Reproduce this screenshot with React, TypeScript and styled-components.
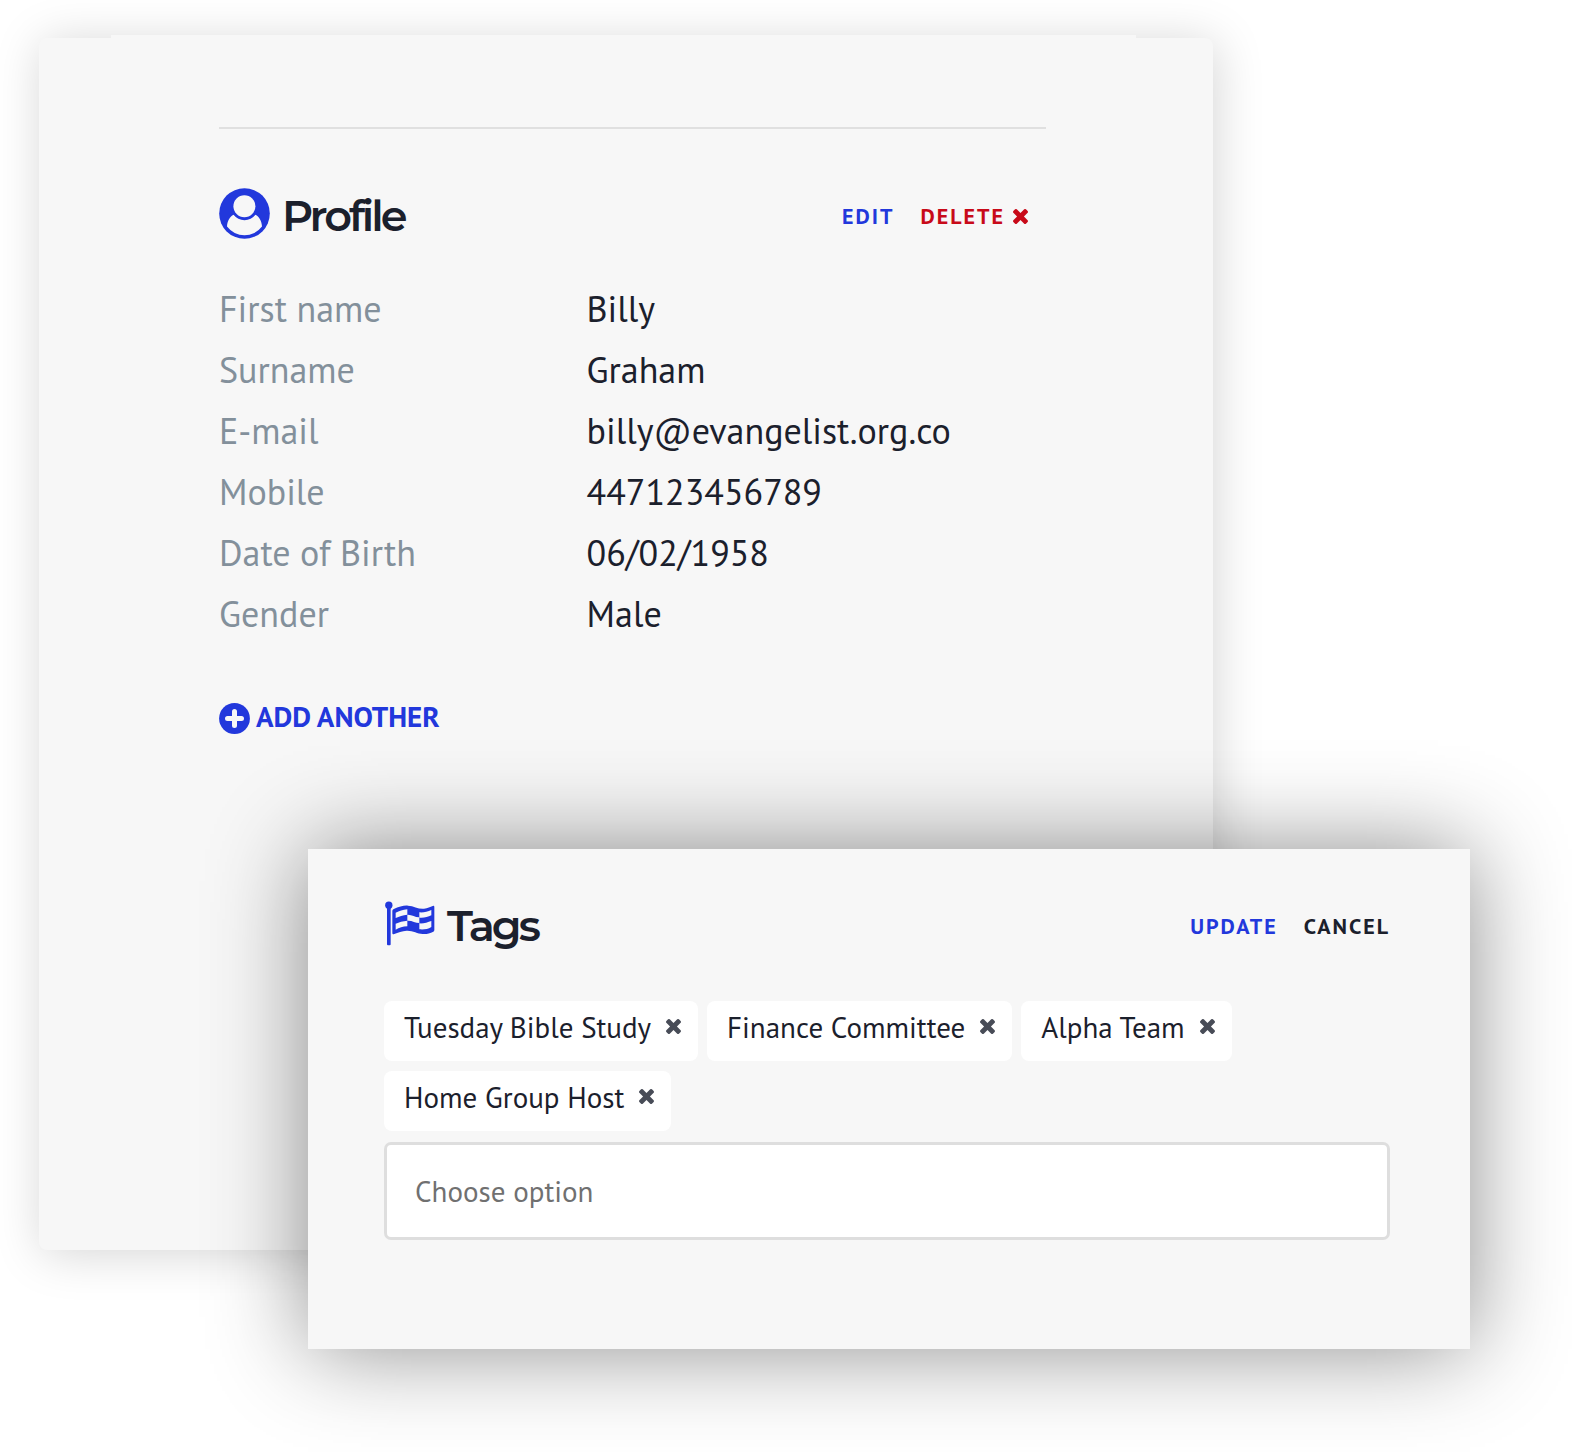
import React, { useState } from "react";
import styled, { createGlobalStyle } from "styled-components";

const BLUE = "#2238dc";
const INK = "#1b202c";
const RED = "#c80a19";

const GlobalStyle = createGlobalStyle`
  *, *::before, *::after { box-sizing: border-box; }
  body {
    margin: 0;
    background: #fff;
    color: ${INK};
    font-family: "PT Sans", "Noto Sans", sans-serif;
    overflow-x: hidden;
  }
  button, input { font-family: inherit; }
`;

const Page = styled.main`
  display: flow-root;
`;

const ProfileCard = styled.section`
  position: relative;
  margin: 38px 359px 0 39px;
  padding: 89px 167px 516px 180px;
  background: #f7f7f7;
  border-radius: 8px;
  box-shadow: 3px 4px 48px rgba(0, 0, 0, 0.17);

  &::before {
    content: "";
    position: absolute;
    top: -3px;
    left: 72px;
    right: 77px;
    height: 3px;
    background: #f7f7f7;
  }
`;

const Ruled = styled.div`
  border-top: 2px solid #e0e0e0;
  padding-top: 59px;
`;

const TagsPanel = styled.section`
  position: relative;
  margin: -401px 102px 104px 308px;
  padding: 49px 80px 109px 76px;
  background: #f7f7f7;
  box-shadow: 0 0 90px rgba(0, 0, 0, 0.45);
`;

const Header = styled.header<{ $inset?: boolean }>`
  display: flex;
  align-items: center;
  height: 56px;
  padding-right: ${(p) => (p.$inset ? 18 : 0)}px;
`;

const IconBox = styled.span`
  display: flex;
  margin-right: 12px;
  margin-bottom: 5px;
`;

const Title = styled.h2`
  margin: 0;
  font: 600 43px/56px Montserrat, "Noto Sans", sans-serif;
  letter-spacing: -3px;
`;

const Actions = styled.div`
  display: flex;
  gap: 26px;
  margin-left: auto;
`;

const Action = styled.button<{ $color: string }>`
  display: flex;
  align-items: center;
  gap: 8px;
  padding: 0;
  border: 0;
  background: none;
  color: ${(p) => p.$color};
  font-size: 22px;
  line-height: 28px;
  font-weight: 700;
  letter-spacing: 2px;
  cursor: pointer;
`;

const Details = styled.dl`
  margin: 34px 0 54px;
`;

const DetailRow = styled.div`
  display: grid;
  grid-template-columns: 4fr 5fr;
  font-size: 36px;
  line-height: 61px;
`;

const Term = styled.dt`
  color: #83909b;
`;

const Value = styled.dd`
  margin: 0;
`;

const AddButton = styled.button`
  display: flex;
  align-items: center;
  gap: 6px;
  padding: 0;
  border: 0;
  background: none;
  color: ${BLUE};
  font-size: 29px;
  line-height: 36px;
  font-weight: 700;
  cursor: pointer;

  svg {
    align-self: flex-end;
  }
`;

const TagList = styled.ul`
  display: flex;
  flex-wrap: wrap;
  gap: 10px 9px;
  margin: 47px 0 11px;
  padding: 0;
  list-style: none;
`;

const Tag = styled.li`
  display: flex;
  align-items: center;
  gap: 15px;
  height: 60px;
  padding: 0 17px 9px 20px;
  border-radius: 8px;
  background: #fff;
  font-size: 29px;
`;

const RemoveButton = styled.button`
  display: flex;
  padding: 0;
  border: 0;
  background: none;
  color: #484c57;
  cursor: pointer;
`;

const TagInput = styled.input`
  display: block;
  width: 100%;
  height: 98px;
  padding: 0 28px;
  border: 3px solid #dedede;
  border-radius: 7px;
  background: #fff;
  color: ${INK};
  font-size: 29px;

  &::placeholder {
    color: #707070;
    opacity: 1;
  }
`;

const CrossIcon = () => (
  <svg width="15" height="15" viewBox="302 366 1188 1188" fill="currentColor" aria-hidden="true">
    <path d="M1490 1322q0 40-28 68l-136 136q-28 28-68 28t-68-28l-294-294-294 294q-28 28-68 28t-68-28l-136-136q-28-28-28-68t28-68l294-294-294-294q-28-28-28-68t28-68l136-136q28-28 68-28t68 28l294 294 294-294q28-28 68-28t68 28l136 136q28 28 28 68t-28 68l-294 294 294 294q28 28 28 68z" />
  </svg>
);

const PersonIcon = () => (
  <svg width="51" height="51" viewBox="0 0 51 51" aria-hidden="true">
    <circle cx="25.5" cy="25.5" r="25.3" fill={BLUE} />
    <circle cx="25.4" cy="18.2" r="11" fill="#f7f7f7" />
    <path
      d="M8 38.5C8.3 33 11 28.5 14.5 26.8A14 14 0 0 0 36.5 26.8C40 28.5 42.7 33 43 38.5A22 22 0 0 1 8 38.5Z"
      fill="#f7f7f7"
    />
  </svg>
);

const FlagIcon = () => (
  <svg width="51" height="45" viewBox="44 62 153 135" aria-hidden="true">
    <g fill={BLUE}>
      <circle cx="58.5" cy="74.5" r="11" />
      <rect x="53" y="74" width="11" height="121" rx="3" />
      <path d="M69 92Q69 89 72 87C90 78 104 75 116 76C134 77 148 87 164 85C175 84 183 80 190 77Q195 75 195 80V149Q195 152 192 154C181 160 170 162 160 161C144 160 130 150 112 151C98 152 86 156 75 161Q69 164 69 158Z" />
    </g>
    <g fill="#f7f7f7">
      <path d="M79 97C90 92 100 88 114 87V103C100 105 90 108 79 113Z" />
      <path d="M114 103C128 102 138 112 150 111V128C138 128 128 120 114 121Z" />
      <path d="M150 96C163 97 175 94 186 89V105C175 111 163 113 150 112Z" />
      <path d="M79 130C90 125 100 122 114 121V138C100 138 90 142 79 148Z" />
      <path d="M150 129C163 130 175 126 186 122V140C175 147 163 148 150 147Z" />
    </g>
  </svg>
);

const PlusIcon = () => (
  <svg width="31" height="31" viewBox="0 0 31 31" aria-hidden="true">
    <circle cx="15.5" cy="15.5" r="15.4" fill={BLUE} />
    <path d="M15.5 8.5V22.5M8.5 15.5H22.5" stroke="#f7f7f7" strokeWidth="5" strokeLinecap="round" />
  </svg>
);

const details: [string, string][] = [
  ["First name", "Billy"],
  ["Surname", "Graham"],
  ["E-mail", "billy@evangelist.org.co"],
  ["Mobile", "447123456789"],
  ["Date of Birth", "06/02/1958"],
  ["Gender", "Male"],
];

export default function App() {
  const [tags, setTags] = useState([
    "Tuesday Bible Study",
    "Finance Committee",
    "Alpha Team",
    "Home Group Host",
  ]);

  return (
    <Page>
      <GlobalStyle />
      <ProfileCard>
        <Ruled>
          <Header $inset>
            <IconBox>
              <PersonIcon />
            </IconBox>
            <Title>Profile</Title>
            <Actions>
              <Action $color={BLUE}>EDIT</Action>
              <Action $color={RED}>
                DELETE
                <CrossIcon />
              </Action>
            </Actions>
          </Header>
          <Details>
            {details.map(([term, value]) => (
              <DetailRow key={term}>
                <Term>{term}</Term>
                <Value>{value}</Value>
              </DetailRow>
            ))}
          </Details>
          <AddButton>
            <PlusIcon />
            ADD ANOTHER
          </AddButton>
        </Ruled>
      </ProfileCard>

      <TagsPanel>
        <Header>
          <IconBox>
            <FlagIcon />
          </IconBox>
          <Title>Tags</Title>
          <Actions>
            <Action $color={BLUE}>UPDATE</Action>
            <Action $color={INK}>CANCEL</Action>
          </Actions>
        </Header>
        <TagList>
          {tags.map((tag) => (
            <Tag key={tag}>
              {tag}
              <RemoveButton
                aria-label={`Remove ${tag}`}
                onClick={() => setTags(tags.filter((t) => t !== tag))}
              >
                <CrossIcon />
              </RemoveButton>
            </Tag>
          ))}
        </TagList>
        <TagInput type="text" aria-label="Choose option" placeholder="Choose option" />
      </TagsPanel>
    </Page>
  );
}
